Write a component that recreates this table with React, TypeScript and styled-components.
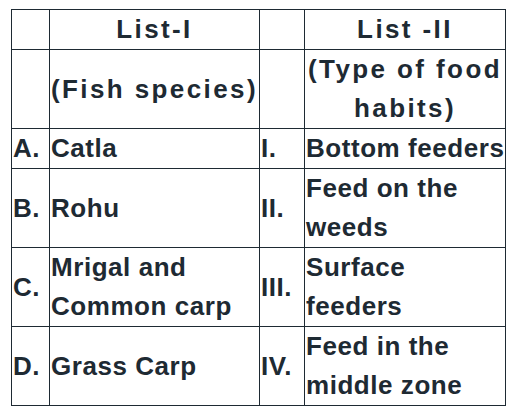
import React from 'react';
import styled, { createGlobalStyle } from 'styled-components';

const GlobalStyle = createGlobalStyle`
  html, body {
    margin: 0;
    padding: 0;
    background: #ffffff;
  }
`;

type Row = { key: string; species: string; num: string; habit: string };

// line breaks follow the reference wrapping
const rows: Row[] = [
  { key: 'A.', species: 'Catla', num: 'I.', habit: 'Bottom feeders' },
  { key: 'B.', species: 'Rohu', num: 'II.', habit: 'Feed on the\nweeds' },
  { key: 'C.', species: 'Mrigal and\nCommon carp', num: 'III.', habit: 'Surface\nfeeders' },
  { key: 'D.', species: 'Grass Carp', num: 'IV.', habit: 'Feed in the\nmiddle zone' },
];

export default function App() {
  return (
    <>
      <GlobalStyle />
      <Page>
        <MatchTable>
          <colgroup>
            <col style={{ width: 38 }} />
            <col style={{ width: 210 }} />
            <col style={{ width: 45 }} />
            <col style={{ width: 201 }} />
          </colgroup>
          <tbody>
            <tr>
              <Cell />
              <Cell $head $center>List-I</Cell>
              <Cell />
              <Cell $head $center>List -II</Cell>
            </tr>
            <tr>
              <Cell />
              <Cell $head>(Fish species)</Cell>
              <Cell />
              <Cell $head $center>{'(Type of food\nhabits)'}</Cell>
            </tr>
            {rows.map((r) => (
              <tr key={r.key}>
                <Cell>{r.key}</Cell>
                <Cell>{r.species}</Cell>
                <Cell>{r.num}</Cell>
                <Cell>{r.habit}</Cell>
              </tr>
            ))}
          </tbody>
        </MatchTable>
      </Page>
    </>
  );
}

const Page = styled.div`
  padding: 9px 0 0 11px;
  font-family: 'Liberation Sans', Arial, sans-serif;
  color: #1e2a33;
`;

const MatchTable = styled.table`
  border-collapse: collapse;
  table-layout: fixed;
  width: 495px;
`;

const Cell = styled.td<{ $center?: boolean; $head?: boolean }>`
  border: 1px solid #1e2a33;
  padding: 0 1px;
  height: 39px;
  font-size: 26px;
  font-weight: 700;
  line-height: 39px;
  letter-spacing: ${(p) => (p.$head ? '2.4px' : '0.55px')};
  vertical-align: middle;
  text-align: ${(p) => (p.$center ? 'center' : 'left')};
  white-space: pre;
  overflow: hidden;
`;
